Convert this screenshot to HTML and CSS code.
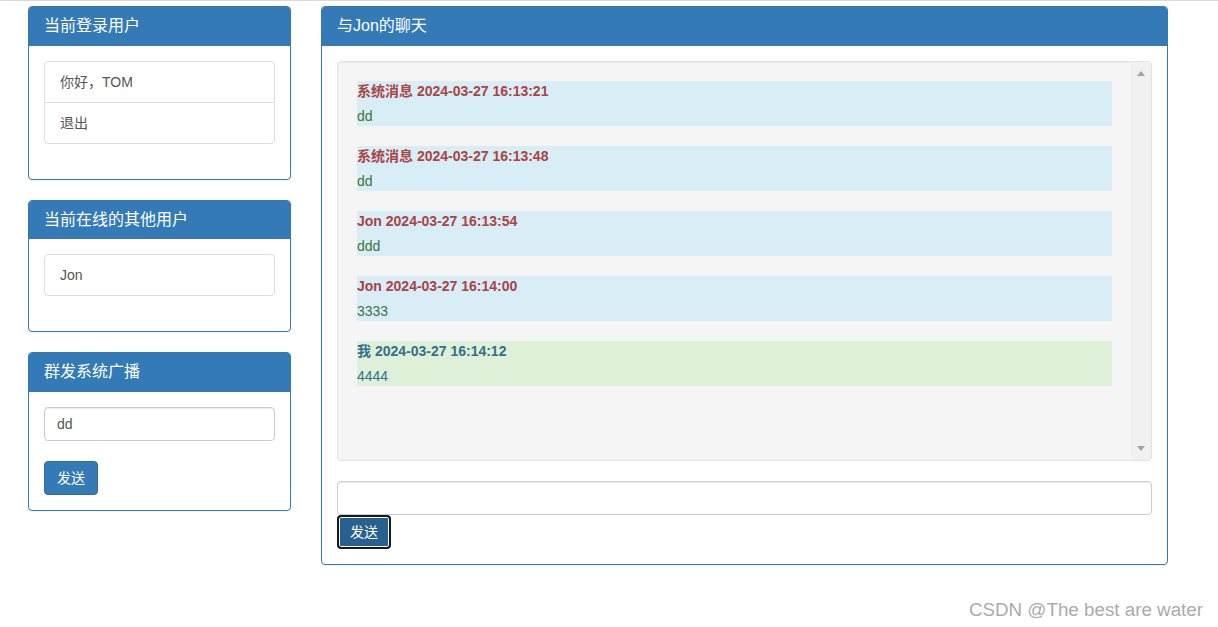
FILE: index.html
```html
<!DOCTYPE html>
<html lang="zh-CN">
<head>
<meta charset="utf-8">
<title>聊天室</title>
<link rel="stylesheet" href="styles.css">
</head>
<body>
<div class="topline"></div>
<div class="page">
  <div class="side">
    <div class="panel">
      <div class="panel-heading">当前登录用户</div>
      <div class="panel-body">
        <div class="list-group">
          <div class="list-item">你好，TOM</div>
          <div class="list-item">退出</div>
        </div>
      </div>
    </div>
    <div class="panel">
      <div class="panel-heading">当前在线的其他用户</div>
      <div class="panel-body">
        <div class="list-group">
          <div class="list-item">Jon</div>
        </div>
      </div>
    </div>
    <div class="panel">
      <div class="panel-heading">群发系统广播</div>
      <div class="panel-body">
        <div class="form-control">dd</div>
        <div class="btn btn-side">发送</div>
      </div>
    </div>
  </div>
  <div class="main">
    <div class="panel">
      <div class="panel-heading">与Jon的聊天</div>
      <div class="panel-body">
        <div class="well">
          <div class="msgs">
            <div class="msg info">
              <div class="msg-head danger">系统消息 2024-03-27 16:13:21</div>
              <div class="msg-text success">dd</div>
            </div>
            <div class="msg info">
              <div class="msg-head danger">系统消息 2024-03-27 16:13:48</div>
              <div class="msg-text success">dd</div>
            </div>
            <div class="msg info">
              <div class="msg-head danger">Jon 2024-03-27 16:13:54</div>
              <div class="msg-text success">ddd</div>
            </div>
            <div class="msg info">
              <div class="msg-head danger">Jon 2024-03-27 16:14:00</div>
              <div class="msg-text success">3333</div>
            </div>
            <div class="msg mine">
              <div class="msg-head blue">我 2024-03-27 16:14:12</div>
              <div class="msg-text blue">4444</div>
            </div>
          </div>
          <div class="scrollbar">
            <span class="arrow-up"></span>
            <span class="arrow-down"></span>
          </div>
        </div>
        <div class="form-control chat-input"></div>
        <div class="btn btn-focus">发送</div>
      </div>
    </div>
  </div>
</div>
<div class="watermark">CSDN @The best are water</div>
</body>
</html>
```

FILE: styles.css
```css
html, body {
  margin: 0;
  padding: 0;
  background: #fff;
}
body {
  font-family: "Liberation Sans", "Noto Sans CJK SC", sans-serif;
  font-size: 14px;
  line-height: 20px;
  color: #333;
  position: relative;
  height: 627px;
  overflow: hidden;
}
.topline {
  height: 1px;
  background: #dadada;
}
.page {
  display: flex;
  gap: 30px;
  padding: 5px 0 0 28px;
  align-items: flex-start;
}
.side {
  width: 263px;
  display: flex;
  flex-direction: column;
  gap: 20px;
}
.main {
  width: 847px;
}
.panel {
  border: 1px solid #337ab7;
  border-radius: 4px;
  background: #fff;
  box-shadow: 0 1px 1px rgba(0, 0, 0, .05);
}
.panel-heading {
  background: #337ab7;
  color: #fff;
  font-size: 16px;
  line-height: 17.6px;
  padding: 10px 15px;
  border-bottom: 1px solid #337ab7;
  border-radius: 3px 3px 0 0;
}
.panel-body {
  padding: 15px;
}
.list-group {
  margin-bottom: 20px;
  display: flex;
  flex-direction: column;
}
.list-item {
  border: 1px solid #ddd;
  padding: 10px 15px;
  color: #555;
  margin-bottom: -1px;
}
.list-item:first-child {
  border-radius: 4px 4px 0 0;
}
.list-item:last-child {
  border-radius: 0 0 4px 4px;
  margin-bottom: 0;
}
.list-item:only-child {
  border-radius: 4px;
}
.form-control {
  height: 34px;
  box-sizing: border-box;
  padding: 6px 12px;
  border: 1px solid #ccc;
  border-radius: 4px;
  color: #555;
  box-shadow: inset 0 1px 1px rgba(0, 0, 0, .075);
}
.btn {
  display: inline-block;
  box-sizing: border-box;
  height: 34px;
  padding: 6px 12px;
  border: 1px solid #2e6da4;
  border-radius: 4px;
  background: #337ab7;
  color: #fff;
}
.btn-side {
  margin-top: 20px;
}
.btn-focus {
  background: #286090;
  border: 2px solid #161a1e;
  padding: 5px 11px;
  box-shadow: inset 0 0 0 1px #fff;
}
.well {
  height: 400px;
  box-sizing: border-box;
  border: 1px solid #e3e3e3;
  border-radius: 4px;
  background: #f5f5f5;
  box-shadow: inset 0 1px 1px rgba(0, 0, 0, .05);
  margin-bottom: 20px;
  display: flex;
  overflow: hidden;
}
.msgs {
  flex: 1;
  padding: 19px;
  display: flex;
  flex-direction: column;
  gap: 20px;
}
.scrollbar {
  width: 20px;
  background: #f1f1f1;
  display: flex;
  flex-direction: column;
  justify-content: space-between;
  align-items: center;
  padding: 9px 0 9px;
  box-sizing: border-box;
}
.arrow-up {
  width: 0;
  height: 0;
  border-left: 4.5px solid transparent;
  border-right: 4.5px solid transparent;
  border-bottom: 5px solid #a3a3a3;
}
.arrow-down {
  width: 0;
  height: 0;
  border-left: 4.5px solid transparent;
  border-right: 4.5px solid transparent;
  border-top: 5px solid #a3a3a3;
}
.msg {
  height: 45px;
}
.info {
  background: #d9edf7;
}
.mine {
  background: #dff0d8;
}
.msg-head {
  font-weight: bold;
  margin-bottom: 5px;
}
.danger {
  color: #a94442;
}
.success {
  color: #3c763d;
}
.blue {
  color: #31708f;
}
.chat-input {
  width: 100%;
}
.watermark {
  position: absolute;
  right: 15px;
  top: 599px;
  font-size: 18.8px;
  line-height: 22px;
  color: #ababab;
}
```
